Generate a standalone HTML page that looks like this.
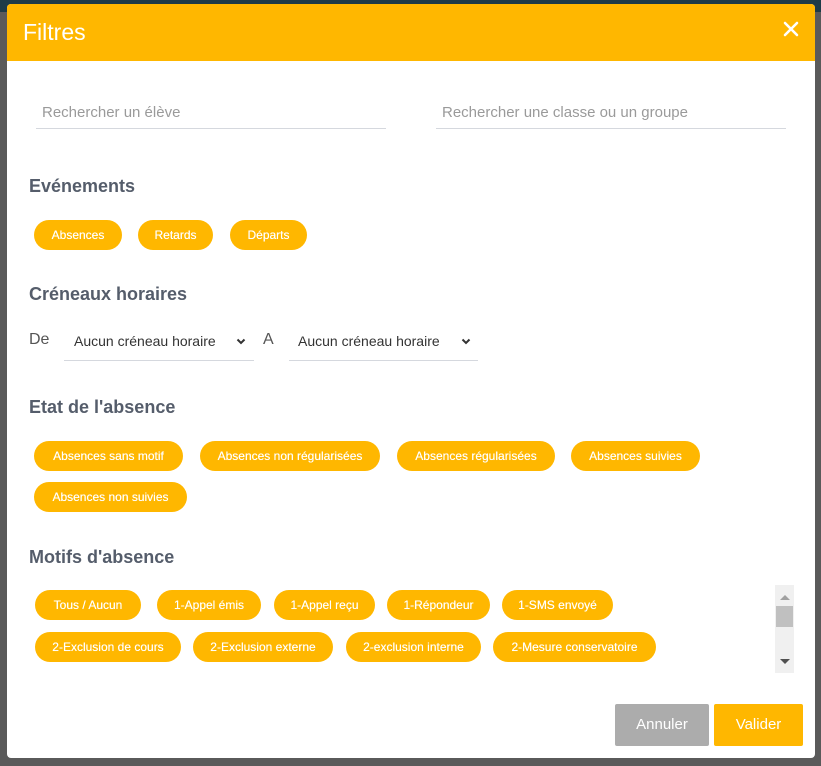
<!DOCTYPE html>
<html><head><meta charset="utf-8"><style>
*{margin:0;padding:0;box-sizing:border-box}
body{width:821px;height:766px;background:#5a5a5a;position:relative;overflow:hidden;font-family:"Liberation Sans",sans-serif}
.top{position:absolute;left:0;top:0;width:821px;height:12px;background:#1d3b48}
.modal{position:absolute;left:7px;top:4px;width:808px;height:754px;background:#fff;border-radius:4px;overflow:hidden}
.hdr{position:absolute;left:0;top:0;width:808px;height:57px;background:#ffb700}
.hdr .t{position:absolute;left:16px;top:15px;color:#fff;font-size:23px}
.a{position:absolute}
.ph{color:#9a9a9a;font-size:15px}
.ul{position:absolute;height:1px;background:#d5d8de}
.h{position:absolute;left:22px;color:#555d6b;font-size:18px;font-weight:bold}
.p{position:absolute;height:30px;border-radius:15px;background:#ffb700;color:#fff;font-size:12px;line-height:30px;text-align:center;white-space:nowrap;text-shadow:0 0 0.4px #fff}
.sel{color:#333;font-size:14px}
.btn{position:absolute;top:700px;height:42px;color:#fff;font-size:15px;line-height:42px;text-align:center;border-radius:2px}
</style></head><body>
<div class="top"></div>
<div class="modal">
<div class="hdr"><div class="t">Filtres</div>
<svg class="a" style="left:776px;top:17px" width="16" height="16" viewBox="0 0 16 16"><path d="M2 2L14 14M14 2L2 14" stroke="#fff" stroke-width="2.6" stroke-linecap="round"/></svg></div>
<div class="a ph" style="left:35px;top:100px">Rechercher un élève</div>
<div class="ul" style="left:29px;top:124px;width:350px"></div>
<div class="a ph" style="left:435px;top:100px">Rechercher une classe ou un groupe</div>
<div class="ul" style="left:429px;top:124px;width:350px"></div>

<div class="h" style="top:172px">Evénements</div>
<div class="p" style="left:27px;top:216px;width:88px">Absences</div>
<div class="p" style="left:131px;top:216px;width:75px">Retards</div>
<div class="p" style="left:223px;top:216px;width:77px">Départs</div>

<div class="h" style="top:280px">Créneaux horaires</div>
<div class="a" style="left:22px;top:327px;font-size:16px;color:#555">De</div>
<div class="a sel" style="left:67px;top:329px">Aucun créneau horaire</div>
<svg class="a" style="left:229px;top:334px" width="10" height="7" viewBox="0 0 10 7"><path d="M1.5 1.5L5 5L8.5 1.5" stroke="#333" stroke-width="2" fill="none"/></svg>
<div class="ul" style="left:57px;top:356px;width:190px"></div>
<div class="a" style="left:256px;top:327px;font-size:16px;color:#555">A</div>
<div class="a sel" style="left:291px;top:329px">Aucun créneau horaire</div>
<svg class="a" style="left:454px;top:334px" width="10" height="7" viewBox="0 0 10 7"><path d="M1.5 1.5L5 5L8.5 1.5" stroke="#333" stroke-width="2" fill="none"/></svg>
<div class="ul" style="left:282px;top:356px;width:189px"></div>

<div class="h" style="top:393px">Etat de l'absence</div>
<div class="p" style="left:27px;top:437px;width:149px">Absences sans motif</div>
<div class="p" style="left:193px;top:437px;width:180px">Absences non régularisées</div>
<div class="p" style="left:390px;top:437px;width:158px">Absences régularisées</div>
<div class="p" style="left:564px;top:437px;width:129px">Absences suivies</div>
<div class="p" style="left:27px;top:478px;width:153px">Absences non suivies</div>

<div class="h" style="top:543px">Motifs d'absence</div>
<div class="p" style="left:28px;top:586px;width:106px">Tous / Aucun</div>
<div class="p" style="left:150px;top:586px;width:104px">1-Appel émis</div>
<div class="p" style="left:267px;top:586px;width:101px">1-Appel reçu</div>
<div class="p" style="left:380px;top:586px;width:103px">1-Répondeur</div>
<div class="p" style="left:495px;top:586px;width:111px">1-SMS envoyé</div>
<div class="p" style="left:28px;top:628px;width:146px">2-Exclusion de cours</div>
<div class="p" style="left:186px;top:628px;width:140px">2-Exclusion externe</div>
<div class="p" style="left:339px;top:628px;width:135px">2-exclusion interne</div>
<div class="p" style="left:486px;top:628px;width:163px">2-Mesure conservatoire</div>

<div class="a" style="left:768px;top:581px;width:19px;height:88px;background:#f0f0f0"></div>
<div class="a" style="left:769px;top:602px;width:17px;height:21px;background:#c0c0c0"></div>
<div class="a" style="left:773px;top:591px;width:0;height:0;border-left:5px solid transparent;border-right:5px solid transparent;border-bottom:5px solid #a0a0a0"></div>
<div class="a" style="left:773px;top:655px;width:0;height:0;border-left:5px solid transparent;border-right:5px solid transparent;border-top:5px solid #505050"></div>

<div class="btn" style="left:608px;width:94px;background:#acacac">Annuler</div>
<div class="btn" style="left:707px;width:89px;background:#ffb700">Valider</div>
</div>
</body></html>
